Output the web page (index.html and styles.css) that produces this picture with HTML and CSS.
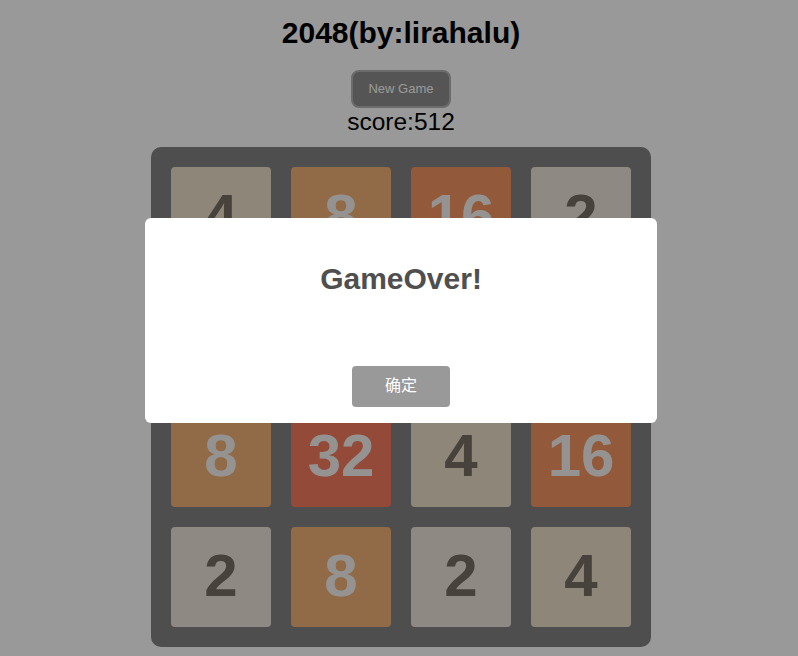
FILE: index.html
```html
<!DOCTYPE html>
<html lang="zh">
<head>
<meta charset="utf-8">
<title>2048</title>
<link rel="stylesheet" href="styles.css">
</head>
<body>
<div class="page">
  <h1 class="title">2048(by:lirahalu)</h1>
  <button class="btn-new">New Game</button>
  <div class="score">score:512</div>
  <div class="board">
    <div class="tile t4">4</div>
    <div class="tile t8">8</div>
    <div class="tile t16">16</div>
    <div class="tile t2">2</div>
    <div class="tile t2">2</div>
    <div class="tile t4">4</div>
    <div class="tile t8">8</div>
    <div class="tile t2">2</div>
    <div class="tile t8">8</div>
    <div class="tile t32">32</div>
    <div class="tile t4">4</div>
    <div class="tile t16">16</div>
    <div class="tile t2">2</div>
    <div class="tile t8">8</div>
    <div class="tile t2">2</div>
    <div class="tile t4">4</div>
  </div>
</div>
<div class="mask"></div>
<div class="modal">
  <div class="modal-title">GameOver!</div>
  <button class="btn-ok">确定</button>
</div>
</body>
</html>
```
FILE: styles.css
```css
html, body {
  margin: 0;
  background: #ffffff;
  height: 100%;
  overflow: hidden;
}
body {
  padding-left: 4px;
  font-family: "Liberation Sans", Arial, sans-serif;
}
.page {
  display: flex;
  flex-direction: column;
  align-items: center;
}
.title {
  margin: 16px 0 0;
  font-size: 30px;
  line-height: 34px;
  font-weight: bold;
  color: #000;
}
.btn-new {
  margin-top: 20px;
  width: 100px;
  height: 38px;
  background: #8e8e8e;
  border: 2px solid #b4b4b4;
  border-radius: 8px;
  color: #ffffff;
  font-family: "Liberation Sans", Arial, sans-serif;
  font-size: 13px;
  padding: 0 0 2px;
}
.score {
  font-size: 24.5px;
  line-height: 28px;
  color: #000;
}
.board {
  margin-top: 11px;
  box-sizing: border-box;
  width: 500px;
  height: 500px;
  padding: 20px;
  background: #828282;
  border-radius: 10px;
  display: grid;
  grid-template-columns: repeat(4, 100px);
  grid-template-rows: repeat(4, 100px);
  gap: 20px;
}
.tile {
  box-sizing: border-box;
  padding-bottom: 4px;
  border-radius: 4px;
  display: flex;
  align-items: center;
  justify-content: center;
  font-size: 60px;
  font-weight: bold;
  color: #f9f6f2;
}
.t2 { background: #eee4da; color: #776e65; }
.t4 { background: #ede0c8; color: #776e65; }
.t8 { background: #f2b179; }
.t16 { background: #f59563; }
.t32 { background: #f67c5f; }
.mask {
  position: fixed;
  inset: 0;
  background: rgba(0, 0, 0, 0.4);
}
.modal {
  position: fixed;
  top: 218px;
  left: calc(50% + 2px);
  transform: translateX(-50%);
  width: 512px;
  height: 205px;
  box-sizing: border-box;
  padding-top: 44px;
  background: #ffffff;
  border-radius: 6px;
  display: flex;
  flex-direction: column;
  align-items: center;
}
.modal-title {
  font-size: 30px;
  line-height: 34px;
  font-weight: bold;
  color: #4f4f4f;
}
.btn-ok {
  margin-top: 70px;
  width: 98px;
  height: 41px;
  background: #999999;
  border: none;
  border-radius: 4px;
  color: #ffffff;
  font-family: "Liberation Sans", "Noto Sans CJK SC", sans-serif;
  font-size: 16px;
  padding: 0 0 5px;
}
```
